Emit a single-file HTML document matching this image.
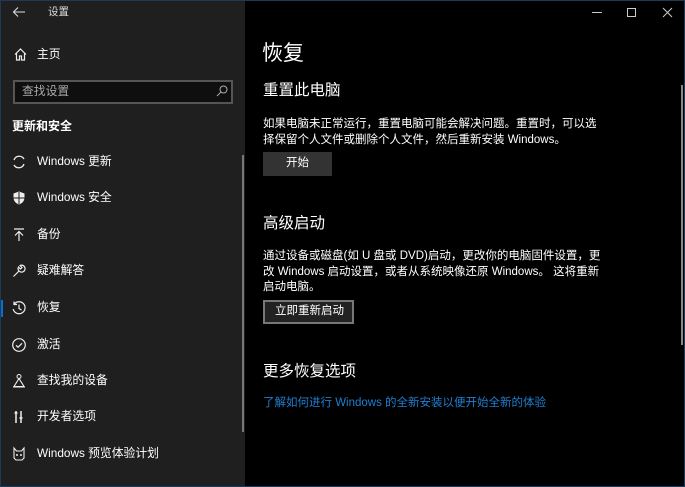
<!DOCTYPE html>
<html><head><meta charset="utf-8"><style>
*{margin:0;padding:0;box-sizing:border-box}
body{width:685px;height:487px;background:#000;position:relative;overflow:hidden;font-family:"Liberation Sans","Noto Sans CJK SC",sans-serif;color:#fff}
.side{position:absolute;left:0;top:0;width:245px;height:487px;background:#1f1f1f}
.t{position:absolute;white-space:nowrap;line-height:1}
.s{font-size:11.8px}
.ic{position:absolute}
.frame{position:absolute;left:0;top:0;width:685px;height:487px;border:1px solid #1d3a56;pointer-events:none}
.p{position:absolute;left:263px;font-size:11.5px;line-height:15.5px;color:#fff;white-space:nowrap}
</style></head><body>
<div class="side"></div>
<svg class="ic" style="left:12px;top:6px" width="14" height="12"><path d="M13 6H2M6 1.5L1.5 6 6 10.5" stroke="#ddd" fill="none" stroke-width="1.1"/></svg>
<div class="t" style="left:48px;top:7px;font-size:10.5px;color:#ddd">设置</div>
<div style="position:absolute;left:592px;top:12px;width:10px;height:1px;background:#ccc"></div>
<div style="position:absolute;left:627px;top:8px;width:9px;height:9px;border:1px solid #ccc"></div>
<svg class="ic" style="left:662px;top:7px" width="11" height="11"><path d="M1 1L10 10M10 1L1 10" stroke="#ccc" stroke-width="1"/></svg>
<svg class="ic" style="left:13px;top:47px" width="15" height="15"><path d="M2 7.5L7.5 2 13 7.5M3.5 6v7h3v-4h2v4h3V6" stroke="#eee" fill="none" stroke-width="1.2"/></svg>
<div class="t s" style="left:37px;top:49px">主页</div>
<div style="position:absolute;left:13px;top:80px;width:220px;height:24px;border:2px solid #555;background:#0f0f0f"></div>
<div class="t" style="left:22px;top:86px;font-size:11.8px;color:#aaa">查找设置</div>
<svg class="ic" style="left:215px;top:84px" width="14" height="14"><circle cx="8.5" cy="5.5" r="3.5" stroke="#aaa" fill="none"/><path d="M6 8L2 12" stroke="#aaa"/></svg>
<div class="t" style="left:12px;top:120px;font-size:12px;font-weight:bold">更新和安全</div>
<svg class="ic" style="left:11px;top:154px" width="16" height="16"><path d="M3 6a5.5 5.5 0 0 1 10-1M13 10a5.5 5.5 0 0 1-10 1" stroke="#eee" fill="none" stroke-width="1.3"/></svg>
<div class="t s" style="left:37px;top:156px">Windows 更新</div>
<svg class="ic" style="left:11px;top:190px" width="16" height="16"><path d="M8 1.5L2.5 3.5v4c0 3.5 2.5 6 5.5 7 3-1 5.5-3.5 5.5-7v-4z" fill="#eee"/><path d="M8 2v12M2.5 8h11" stroke="#1f1f1f" stroke-width="1"/></svg>
<div class="t s" style="left:37px;top:192px">Windows 安全</div>
<svg class="ic" style="left:11px;top:227px" width="16" height="16"><path d="M3 2h10M8 14V4.5M4 8.5l4-4 4 4" stroke="#eee" fill="none" stroke-width="1.2"/></svg>
<div class="t s" style="left:37px;top:229px">备份</div>
<svg class="ic" style="left:11px;top:263px" width="16" height="16"><path d="M2.5 13.5L8 8M8 8a3.5 3.5 0 1 0 1-5.5l2 2-1.5 1.5-2-2A3.5 3.5 0 0 0 8 8" stroke="#eee" fill="none" stroke-width="1.2"/></svg>
<div class="t s" style="left:37px;top:265px">疑难解答</div>
<div style="position:absolute;left:0;top:300px;width:3px;height:17px;background:#0a6ed1"></div>
<svg class="ic" style="left:11px;top:300px" width="16" height="16"><path d="M3 4.5A6 6 0 1 1 2.2 9M3 1.5v3h3M8 4.5v4l2.5 1.5" stroke="#eee" fill="none" stroke-width="1.2"/></svg>
<div class="t s" style="left:37px;top:302px">恢复</div>
<svg class="ic" style="left:11px;top:337px" width="16" height="16"><circle cx="8" cy="8" r="6.3" stroke="#eee" fill="none" stroke-width="1.2"/><path d="M5 8.3l2 2 4-4" stroke="#eee" fill="none" stroke-width="1.2"/></svg>
<div class="t s" style="left:37px;top:339px">激活</div>
<svg class="ic" style="left:11px;top:373px" width="16" height="16"><circle cx="8" cy="3.5" r="2" stroke="#eee" fill="none"/><path d="M8 5.5L3 13.5h10zM2 14h12" stroke="#eee" fill="none" stroke-width="1.1"/></svg>
<div class="t s" style="left:37px;top:375px">查找我的设备</div>
<svg class="ic" style="left:11px;top:409px" width="16" height="16"><path d="M5 2v12M10 2v12M3.5 4h3M8.5 9h3" stroke="#eee" fill="none" stroke-width="1.5"/></svg>
<div class="t s" style="left:37px;top:411px">开发者选项</div>
<svg class="ic" style="left:11px;top:446px" width="16" height="16"><path d="M3 2l2.5 3h5L13 2v10l-2 2H5l-2-2z" stroke="#eee" fill="none" stroke-width="1.1"/><circle cx="6" cy="9" r="1" fill="#eee"/><circle cx="10" cy="9" r="1" fill="#eee"/></svg>
<div class="t s" style="left:37px;top:448px">Windows 预览体验计划</div>
<div style="position:absolute;left:242px;top:155px;width:2px;height:277px;background:#777"></div>
<div class="t" style="left:262px;top:43px;font-size:21px">恢复</div>
<div class="t" style="left:263px;top:83px;font-size:15.5px">重置此电脑</div>
<div class="p" style="top:117px">如果电脑未正常运行，重置电脑可能会解决问题。重置时，可以选<br>择保留个人文件或删除个人文件，然后重新安装 Windows。</div>
<div style="position:absolute;left:263px;top:152px;width:69px;height:24px;background:#333"></div>
<div class="t" style="left:286px;top:158px;font-size:11.5px">开始</div>
<div class="t" style="left:263px;top:216px;font-size:15.5px">高级启动</div>
<div class="p" style="top:249px">通过设备或磁盘(如 U 盘或 DVD)启动，更改你的电脑固件设置，更<br>改 Windows 启动设置，或者从系统映像还原 Windows。 这将重新<br>启动电脑。</div>
<div style="position:absolute;left:263px;top:300px;width:91px;height:24px;border:2px solid #777;background:#222"></div>
<div class="t" style="left:275px;top:306px;font-size:11.5px">立即重新启动</div>
<div class="t" style="left:263px;top:364px;font-size:15.5px">更多恢复选项</div>
<div class="t" style="left:263px;top:398px;font-size:11.5px;color:#1f7fd4">了解如何进行 Windows 的全新安装以便开始全新的体验</div>
<div style="position:absolute;left:681px;top:85px;width:2px;height:260px;background:#888"></div>
<div class="frame"></div>
</body></html>
